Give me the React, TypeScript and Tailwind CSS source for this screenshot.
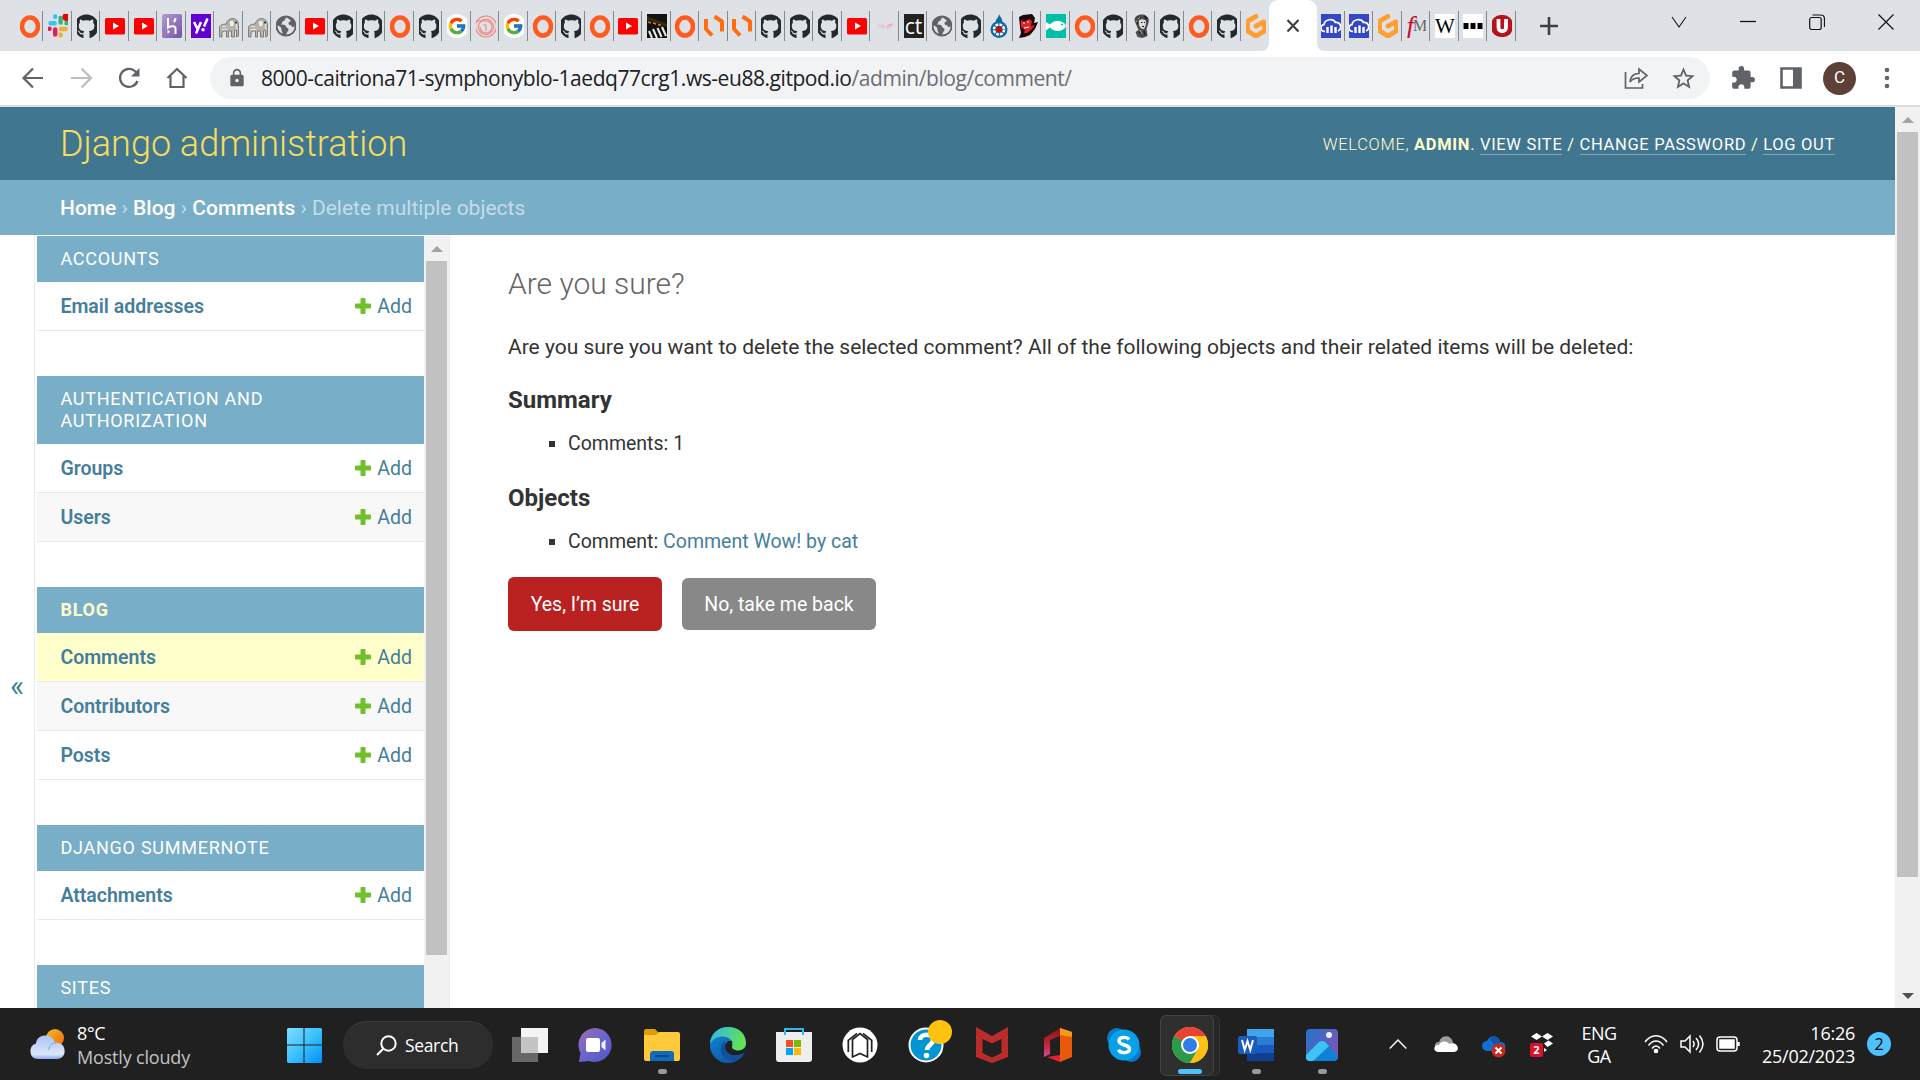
import React from "react";
import { FaGithub } from "react-icons/fa";
import { FcGoogle } from "react-icons/fc";
import { SiGitpod } from "react-icons/si";
import { MdOutlineStarBorder, MdLock, MdExtension } from "react-icons/md";

const UI = "font-['Open_Sans','Noto_Sans',sans-serif]";

const Svg = ({ children, vb = "0 0 24 24", c = "w-6 h-6" }: { children: React.ReactNode; vb?: string; c?: string }) => (
  <svg viewBox={vb} className={`${c} shrink-0`} fill="none">{children}</svg>
);

const Ring = () => (
  <Svg><ellipse cx="12" cy="12.5" rx="8" ry="9" stroke="#ff5a1f" strokeWidth="4.6" /></Svg>
);
const Slack = () => (
  <Svg>
    <g strokeWidth="4.4" strokeLinecap="round">
      <path d="M4.5 9.2h4.2M9.2 2.4v.3" stroke="#36c5f0" />
      <path d="M14.6 4v4.5" stroke="#2eb67d" /><path d="M20.5 9h.2" stroke="#2eb67d" />
      <path d="M15 15h4.8M14.6 20.6v.6" stroke="#ecb22e" />
      <path d="M9.2 15.5v5M3.4 14.8h.2" stroke="#e01e5a" />
    </g>
    <circle cx="20.5" cy="3" r="4" fill="#e00" />
  </Svg>
);
const Github = () => <FaGithub className="size-[25px] shrink-0 text-[#24292f]" />;
const Youtube = () => (
  <Svg><rect x="2" y="4" width="20" height="16.5" rx="1.5" fill="#f00" /><path d="M10 8.5v7l6-3.5z" fill="#fff" /></Svg>
);
const Heroku = () => (
  <Svg>
    <defs><linearGradient id="hk" x1="0" y1="0" x2="1" y2="1"><stop stopColor="#b29bd2" /><stop offset="1" stopColor="#76549f" /></linearGradient></defs>
    <rect x="2" width="20" height="24" rx="2" fill="url(#hk)" />
    <path d="M8 4v9.5c3-1.6 7.500-2.300 7.500 1V20M15.500 4c0 1.800-.7 3-1.700 4" stroke="#fff" strokeWidth="2" />
    <path d="M7.500 15.500l2.500 2.300-2.500 2.300z" fill="#fff" />
  </Svg>
);
const Yahoo = () => (
  <Svg>
    <path d="M0 0h24v24H0z" fill="#6001d2" />
    <path d="M5 8l3.300 6.500M12 8L7 19.500M18.500 4.500L15 12.500" stroke="#fff" strokeWidth="2.600" />
    <circle cx="14" cy="15.800" r="1.700" fill="#fff" />
  </Svg>
);
const Elephant = () => (
  <Svg>
    <path d="M2.500 23v-9c0-3 3-4 7-4 0-3 3-5.500 6-5.500 4 0 6 3 6 7V22l-2 1v-7l-2 .5V23h-3v-6h-3v6h-2v-6H7l-2 1v5z" fill="#b9b6af" stroke="#6d6a64" strokeWidth=".8" />
    <path d="M12 7c3-2 5.500 0 5.500 3s-3 4-5 2z" fill="#efece6" stroke="#777" strokeWidth=".5" />
    <path d="M5 13c1-1 3-1 4 0M5 15.500h5M19.500 10l.5 6" stroke="#ece9e2" strokeWidth="1" /><circle cx="19" cy="8.500" r=".9" fill="#111" />
  </Svg>
);
const Globe = () => (
  <Svg>
    <circle cx="12" cy="12" r="10.500" fill="#5f6368" />
    <path d="M12.500 3.500c-2 1-1 3-3 3.500s-1 3-2.500 3.500c2 .5 4.500 0 5 2s2.500 1 2.500 3-2 2-2 5c5 0 8-4 8-8-1 .5-2.500 1-3-.5s-3-.5-3-2.500 2.500-1.500 2-3.500z" fill="#dee1e6" />
    <path d="M3.500 11.500c2 .5 4 1.500 4 4s1 2 1 4.500c-3-1.500-5-4.500-5-8.500z" fill="#dee1e6" />
  </Svg>
);
const Google = () => (
  <span className="flex size-6 shrink-0 items-center justify-center rounded-full bg-white"><FcGoogle className="size-[20px]" /></span>
);
const Pink = () => (
  <Svg><g stroke="#f2857c" strokeWidth="1.100"><circle cx="12" cy="12.500" r="10.500" /><path d="M2 7h10a6 6 0 1 1-6 6M9 11h3v6" /><circle cx="12" cy="13" r="7.600" /></g></Svg>
);
const Piano = () => (
  <Svg>
    <path d="M0 0h24v24H0z" fill="#141210" /><path d="M2 2l20 8v3L2 6z" fill="#3a2a10" />
    <path d="M4 17l3 7M8 15l4 9M12.500 14l4 9M17 13l4 9" stroke="#eee" strokeWidth="2" />
    <path d="M3 8l3 1M8 9l3 1M13 11h3" stroke="#b98c33" strokeWidth="1.500" />
  </Svg>
);
const Hex = () => (
  <Svg><path d="M4 5L4 15 10 21.500M12.500 2.500L20 7.500 20 17.500" stroke="#ff6d10" strokeWidth="4" strokeLinejoin="round" /></Svg>
);
const Feather = () => (
  <Svg><path d="M3 11l7 4 4-2-4-3zM13 12l9-4-3 5-5 3z" fill="#e8c9d2" /><path d="M14 12l5-2" stroke="#e79a9e" /></Svg>
);
const Ct = () => (
  <span className="flex h-6 w-5 shrink-0 items-center justify-center bg-[#222] font-['Open_Sans',sans-serif] text-[21px] leading-6 text-white">ct</span>
);
const Drop = () => (
  <Svg>
    <path d="M12 0c0 4-4 5-3 8h6c1-3-2-5-3-8z" fill="#0b69a3" />
    <circle cx="12" cy="15.500" r="8.500" fill="#0b69a3" /><circle cx="12" cy="15.500" r="5" stroke="#fff" strokeWidth="2.600" strokeDasharray="2.700 1.200" /><circle cx="12" cy="15.500" r="3.200" fill="#b11" />
  </Svg>
);
const Devil = () => (
  <Svg>
    <path d="M3 3l4-2 9-1 3 4-1 5 4-1-3 7-5 6-5 2-6 1 2-5-1-6z" fill="#1c0808" />
    <path d="M5 6l3 2 5-3 3 2-1 5 4-1-3 4-5 4-3 0 1-3-4-3z" fill="#e2222a" /><path d="M7 9h2M11 8h2M8 14l5-1" stroke="#fff" strokeWidth="1.200" />
  </Svg>
);
const Fish = () => (
  <Svg><path d="M0 0h24v24H0z" fill="#00bfa5" /><path d="M2 8l4 2.500C9 7 14 6 17 7.500c3 1 5 3 5 4.500s-3 4-6 4.800c-4 .8-8-.8-10-3.300L2 16.500z" fill="#fff" /><circle cx="18" cy="10.500" r="1" fill="#00bfa5" /></Svg>
);
const Portrait = () => (
  <Svg>
    <path d="M5 8c-2-6 4-8 8-7.500s7 4 5.500 8.500l-2 6 1 7-5 2-5-1-2-5 3-2z" fill="#4b4b4b" /><path d="M9 6.500c2-2 7-1.500 7 1.500s-1 7-3 7-5-3-4-8.500z" fill="#dcdcdc" />
    <path d="M8 3l3 1M14 2l3 3M9 18l3 2M14 17l1 4M11 8.500h1.500M14 8.500h1M12 12.500h2M7 7l1 3" stroke="#161616" strokeWidth="1.100" /><path d="M8 5l2-2M5.500 8l2-1M10 16l2 4" stroke="#ccc" strokeWidth=".8" />
  </Svg>
);
const Gitpod = () => <SiGitpod className="size-6 shrink-0 text-[#ff9e33]" />;
const Cloud = () => (
  <Svg>
    <path d="M0 0h24v24H0z" fill="#3448c5" />
    <path d="M6 17.500c-5 0-5.500-6-1-7C6 5 14 4 16.500 8.500 22 8 23.500 15 19 17" stroke="#fff" strokeWidth="1.700" />
    <path d="M8.500 13v6M12.500 11.500V19M16.500 13v6" stroke="#fff" strokeWidth="2.400" />
  </Svg>
);
const FM = () => (
  <span className="flex h-6 w-5 shrink-0 items-center justify-center font-['Liberation_Serif',serif] leading-6"><i className="text-[27px] text-[#c8102e]">f</i><span className="-ml-px text-[16px] tracking-[-1px] text-[#666]">M</span></span>
);
const Wiki = () => (
  <span className="flex h-6 w-5 shrink-0 items-center justify-center bg-white font-['Liberation_Serif',serif] text-[21px] leading-6 text-black">W</span>
);
const Dots = () => (
  <Svg><path d="M0 0h24v24H0z" fill="#fff" /><path d="M2.500 9h5v6h-5zM9.500 9h5v6h-5zM16.500 9h5v6h-5z" fill="#000" /></Svg>
);
const Shield = () => (
  <Svg><rect x="1.500" y="1" width="21" height="22" rx="9" fill="#b5121b" /><path d="M8.500 5v8.500c0 5 7.500 5 7.500 0V5" stroke="#fff" strokeWidth="3.800" /></Svg>
);

const leftTabs = [
  Ring, Slack, Github, Youtube, Youtube, Heroku, Yahoo, Elephant, Elephant, Globe, Youtube, Github, Github, Ring, Github, Google,
  Pink, Google, Ring, Github, Ring, Youtube, Piano, Ring, Hex, Hex, Github, Github, Github, Youtube, Feather, Ct, Globe, Github,
  Drop, Devil, Fish, Ring, Github, Portrait, Github, Ring, Github, Gitpod,
];
const rightTabs = [Cloud, Cloud, Gitpod, FM, Wiki, Dots, Shield];

const Tab = ({ icon: Icon, last = false }: { icon: React.ComponentType; last?: boolean }) => (
  <div className="flex h-[30px] w-[28.530px] shrink-0 items-center">
    <div className="ml-[4.900px] flex h-6 w-5 items-center justify-center overflow-hidden"><Icon /></div>
    {!last && <div className="ml-auto h-[30px] w-px bg-[#85888c]" />}
  </div>
);

const TabStrip = () => (
  <div className="flex h-[51px] bg-[#dee1e6]">
    <div className="flex w-[1269px] shrink-0 pl-[14.700px] pt-[11px]">
      {leftTabs.map((t, i) => <Tab key={i} icon={t} last={i === leftTabs.length - 1} />)}
    </div>
    <svg className="-ml-2 h-[51px] w-16 shrink-0" viewBox="0 0 64 51">
      <path d="M0 51c6 0 8-4 8-9V10C8 4 12 0 18 0h28c6 0 10 4 10 10v32c0 5 2 9 8 9z" fill="#fff" />
      <path d="M26.500 20l11 11.500M37.500 20l-11 11.500" stroke="#3c4043" strokeWidth="2.200" />
    </svg>
    <div className="-ml-[9px] flex pt-[11px]">{rightTabs.map((t, i) => <Tab key={i} icon={t} />)}</div>
    <svg className="ml-[23px] mt-[16px] size-[20px]" viewBox="0 0 20 20"><path d="M10 1v18M1 10h18" stroke="#3c4043" strokeWidth="2.600" /></svg>
    <div className="ml-auto flex items-center gap-[53px] pb-[8px] pr-[26px]">
      <svg className="size-4" viewBox="0 0 16 16"><path d="M1 3l7 10 7-10" stroke="#222" fill="none" strokeWidth="1.200" /></svg>
      <svg className="size-4" viewBox="0 0 16 16"><path d="M0 7.500h16" stroke="#111" strokeWidth="1.300" /></svg>
      <svg className="size-4" viewBox="0 0 16 16"><rect x=".7" y="3.500" width="11.500" height="12" rx="2" stroke="#111" fill="none" strokeWidth="1.200" /><path d="M3.500 1h8c2.500 0 4 1.500 4 4v8" stroke="#111" fill="none" strokeWidth="1.200" /></svg>
      <svg className="size-4" viewBox="0 0 16 16"><path d="M.5 .5l15 15M15.500 .5l-15 15" stroke="#111" strokeWidth="1.200" /></svg>
    </div>
  </div>
);

const Toolbar = () => (
  <div className="flex h-[56px] items-center border-b-2 border-[#dadce0] bg-white pl-[21px]">
    <svg className="size-6" viewBox="0 0 24 24" fill="none" stroke="#5f6368" strokeWidth="2.200"><path d="M22 12H3M12 2.500L2.500 12l9.500 9.500" /></svg>
    <svg className="ml-[25px] size-6" viewBox="0 0 24 24" fill="none" stroke="#bcbec1" strokeWidth="2.200"><path d="M1 12h19M11.500 2.500L21 12l-9.500 9.500" /></svg>
    <svg className="ml-[23px] size-6" viewBox="0 0 24 24" fill="none" stroke="#5f6368" strokeWidth="2.300"><path d="M20.500 15A9 9 0 1 1 18.500 5.500L21 8" /><path d="M22.500 2v8.500H14z" fill="#5f6368" stroke="none" /></svg>
    <svg className="ml-[24px] size-6" viewBox="0 0 24 24" fill="none" stroke="#5f6368" strokeWidth="2.200"><path d="M2.500 12L12 3l9.500 9M5.500 10v11h13V10" /></svg>
    <div className="ml-[21px] flex h-[42px] w-[1500px] items-center rounded-full bg-[#f1f3f4] pl-[17px] pr-[13.500px]">
      <MdLock className="size-[20px] text-[#5f6368]" />
      <div className={`ml-[14px] pt-[2px] whitespace-nowrap text-[21px] tracking-[-0.445px] text-[#202124] ${UI}`}>8000-caitriona71-symphonyblo-1aedq77crg1.ws-eu88.gitpod.io<span className="text-[#6b6f74]">/admin/blog/comment/</span></div>
      <svg className="ml-auto size-6" viewBox="0 0 24 24" fill="none" stroke="#5f6368" strokeWidth="1.700"><path d="M1.500 6v16h17v-4M6 16c.5-6 4-8.500 9-8.500V3l8 6.500-8 6.500v-4c-4 0-7 1-9 4z" /></svg>
      <MdOutlineStarBorder className="ml-[22px] size-[27px] text-[#5f6368]" />
    </div>
    <MdExtension className="ml-[20px] size-[26px] text-[#5f6368]" />
    <svg className="ml-[24px] size-[22px]" viewBox="0 0 22 22"><path d="M1.500 1.500h19v19h-19z" stroke="#5f6368" strokeWidth="2.600" fill="none" /><path d="M13 1h8v20h-8z" fill="#5f6368" /></svg>
    <div className="ml-[21px] flex size-[33px] items-center justify-center rounded-full bg-[#5d4037] font-[Roboto,sans-serif] text-[17px] text-white">C</div>
    <svg className="ml-[22px] size-6" viewBox="0 0 24 24" fill="#5f6368" ><circle cx="9" cy="4" r="2.300" /><circle cx="9" cy="12" r="2.300" /><circle cx="9" cy="20" r="2.300" /></svg>
  </div>
);

const Arrow = ({ down = false }: { down?: boolean }) => (
  <svg className="h-[6px] w-[12px]" viewBox="0 0 12 6"><path d={down ? "M0 0h12L6 6z" : "M0 6h12L6 0z"} fill={down ? "#505050" : "#a3a3a3"} /></svg>
);

const apps = [
  { name: "Accounts", models: ["Email addresses"] },
  { name: "Authentication and Authorization", models: ["Groups", "Users"] },
  { name: "Blog", models: ["Comments", "Contributors", "Posts"], current: true },
  { name: "Django Summernote", models: ["Attachments"] },
  { name: "Sites", models: ["Sites"] },
];

const Sidebar = () => (
  <div className="flex h-full w-[416px] border-x border-[#eaeaea] pt-px">
    <div className="ml-[2px] w-[387px] shrink-0 overflow-hidden">
      {apps.map((a) => (
        <div key={a.name} className="mb-[45px]">
          <div className={`bg-[#79aec8] px-[23.400px] py-3 text-[18px] leading-[22px] tracking-[0.750px] uppercase ${a.current ? "font-bold text-[#ffc]" : "text-white"}`}>
            <span className="block w-[260px]">{a.name}</span>
          </div>
          {a.models.map((m, i) => (
            <div key={m} className={`flex h-[49px] items-center border-b border-[#e8e8e8] pl-[23.400px] pr-3 text-[19.500px] text-[#447e9b] ${m === "Comments" ? "bg-[#ffc]" : i % 2 ? "bg-[#f8f8f8]" : "bg-white"}`}>
              <span className="pt-[2px] font-semibold">{m}</span>
              <svg className="ml-auto mr-[6px] size-4" viewBox="0 0 16 16"><path d="M6.500 0h3q1 0 1 1v4.500H15q1 0 1 1v3q0 1-1 1h-4.500V15q0 1-1 1h-3q-1 0-1-1v-4.500H1q-1 0-1-1v-3q0-1 1-1h4.500V1q0-1 1-1z" fill="#70bf2b" /></svg>
              <span className="pt-[2px]">Add</span>
            </div>
          ))}
        </div>
      ))}
    </div>
    <div className="flex w-[25px] flex-col items-center bg-[#f1f1f1] pt-[10px]">
      <Arrow />
      <div className="mt-[9px] mr-[2px] ml-[2px] h-[694px] w-[21px] bg-[#c1c1c1]" />
    </div>
  </div>
);

const toolLink = "border-b border-[#7fa5b8] text-white";

const Admin = () => (
  <div className="flex h-[901px] bg-white font-[Roboto,sans-serif]">
    <div className="flex w-[1895px] flex-col">
      <header className="flex h-[73px] shrink-0 items-center justify-between bg-[#417690] px-[60px] text-[#ffc]">
        <h1 className="pt-px text-[36px] font-light text-[#f5dd5d]">Django administration</h1>
        <div className="pt-[2px] whitespace-nowrap text-[16.500px] leading-[19px] tracking-[0.680px] uppercase">
          <span className="font-light">Welcome, </span><b>admin</b>. <span className={toolLink}>View site</span> / <span className={toolLink}>Change password</span> / <span className={toolLink}>Log out</span>
        </div>
      </header>
      <nav className="flex h-[55px] shrink-0 items-center bg-[#79aec8] px-[60px] pt-[2px] text-[21px] text-[#c4dce8]">
        <div><span className="font-medium text-white">Home</span> › <span className="font-medium text-white">Blog</span> › <span className="font-medium text-white">Comments</span> › Delete multiple objects</div>
      </nav>
      <div className="flex min-h-0 flex-1">
        <div className="flex w-[34px] items-center justify-center pb-[4px] pt-[132px] text-[30px] leading-none text-[#447e9b]">«</div>
        <Sidebar />
        <main className="pl-[58px] pt-[31px] text-[#333]">
          <h1 className="text-[30px] leading-[36px] font-light text-[#666]">Are you sure?</h1>
          <p className="mt-[29px] text-[21px] leading-[32px] tracking-[-0.010px]">Are you sure you want to delete the selected comment? All of the following objects and their related items will be deleted:</p>
          <h2 className="mt-[22px] text-[24px] leading-[30px] font-bold">Summary</h2>
          <div className="mt-[14px] flex items-center pl-[41px] text-[19.500px] leading-[30px]"><span className="mr-[13px] size-[6px] bg-[#333]" />Comments: 1</div>
          <h2 className="mt-[24px] text-[24px] leading-[30px] font-bold">Objects</h2>
          <div className="mt-[14px] flex items-center pl-[41px] text-[19.500px] leading-[30px]"><span className="mr-[13px] size-[6px] bg-[#333]" /><span>Comment: <span className="text-[#447e9b]">Comment Wow! by cat</span></span></div>
          <div className="mt-[20px] flex items-center gap-[20px] text-[19.500px] text-white">
            <button className="h-[54px] w-[154px] rounded-[6px] bg-[#ba2121] pt-[2px]">Yes, I’m sure</button>
            <button className="h-[52px] w-[194px] rounded-[6px] bg-[#888] pt-[2px]">No, take me back</button>
          </div>
        </main>
      </div>
    </div>
    <div className="flex w-[25px] flex-col items-center bg-[#f1f1f1] pt-[10px] pb-[9px]">
      <Arrow />
      <div className="mt-[9px] mb-auto h-[745px] w-[21px] bg-[#c1c1c1]" />
      <Arrow down />
    </div>
  </div>
);

const big = "size-9";
const I = ({ children }: { children: React.ReactNode }) => <svg viewBox="0 0 36 36" className={big} fill="none">{children}</svg>;

const dock: { icon: React.ReactNode; mark?: boolean; active?: boolean }[] = [
  { icon: <I><path d="M0 10h26v25H0z" fill="#676767" /><path d="M9 1h27v25H9z" fill="#f4f4f4" /><path d="M9 10h17v16H9z" fill="#c4c4c4" /></I> },
  { icon: <I><defs><linearGradient id="ch" x1="0" y1="0" x2="1" y2="1"><stop stopColor="#a06ab0" /><stop offset=".5" stopColor="#6b66cc" /><stop offset="1" stopColor="#4f55c6" /></linearGradient></defs><path d="M18 1a17 17 0 1 1-7 33L1 35l1.500-9A17 17 0 0 1 18 1z" fill="url(#ch)" /><rect x="8" y="11" width="14" height="14" rx="2" fill="#fff" /><path d="M23.500 16l4-3.500v11l-4-3.500z" fill="#eef" /></I> },
  { mark: true, icon: <I><path d="M0 4q0-2 2-2h9l4 4v8H0z" fill="#e19b06" /><path d="M0 8h12l3-3h19q2 0 2 2v25q0 2-2 2H2q-2 0-2-2z" fill="#ffca3a" /><path d="M6 34v-7q0-3 3-3h18q3 0 3 3v7z" fill="#0f6cbd" /><path d="M11 29h14" stroke="#0a4a8a" strokeWidth="2" /></I> },
  { icon: <I><defs><linearGradient id="ed" x1="0" y1="0" x2="1" y2=".3"><stop stopColor="#2fb4ee" /><stop offset="1" stopColor="#62e356" /></linearGradient><linearGradient id="ed2" x1="0" y1="0" x2="1" y2="1"><stop stopColor="#1088dc" /><stop offset="1" stopColor="#0f4b97" /></linearGradient></defs><circle cx="18" cy="18" r="18" fill="url(#ed2)" /><path d="M0 17C1-6 36-5 36 16c0 7-8 10-14 7-3-2 0-3 0-6 0-9-16-11-22 0z" fill="url(#ed)" /><path d="M22 14c-8-2-11 13 0 14 5 1 9-1 12-2l3-7c-5 6-11 5-14 3-2-1 0-4-1-8z" fill="#202020" /><path d="M15 14c-7 4-6 18 8 20 5 0 9-3 11-7-4 2-8 3-12 1-6-2-8-7-7-14z" fill="#114f9f" /></I> },
  { icon: <I><path d="M0 5h36v27q0 3-3 3H3q-3 0-3-3z" fill="#eee" /><path d="M9 8V2h18v6" stroke="#2fb5f3" strokeWidth="2" /><path d="M10 13h7v7h-7z" fill="#f25022" /><path d="M18 13h7v7h-7z" fill="#7fba00" /><path d="M10 21h7v7h-7z" fill="#00a4ef" /><path d="M18 21h7v7h-7z" fill="#ffb900" /></I> },
  { icon: <I><circle cx="18" cy="18" r="17.500" fill="#fff" /><path d="M10.500 30V12.500L18 6.500l7.500 6V30L18 26.500zM6.300 25V13.300L15 6.300M29.700 25V13.300L21 6.300" stroke="#222" strokeWidth="1.700" /></I> },
  { icon: <div className="relative"><I><circle cx="18" cy="18" r="16.500" fill="#0096d6" stroke="#fff" strokeWidth="2" /><path d="M12 13c0-7 13-7 13 0 0 5-6 5-6 10" stroke="#fff" strokeWidth="4.500" /><circle cx="18.500" cy="28.500" r="2.800" fill="#fff" /></I><span className="absolute -top-[7px] left-5 size-6 rounded-full bg-[#ffc20e]" /></div> },
  { icon: <I><path d="M2 0l16 9L34 0v30l-16 6L2 30zM8.500 12v14l9.500 4.500 9.500-4.500V12L18 16.500z" fill="#ba2b2b" fillRule="evenodd" /></I> },
  { icon: <I><defs><linearGradient id="of" x1="0" y1="0" x2="0" y2="1"><stop stopColor="#8e1212" /><stop offset=".6" stopColor="#c0283b" /><stop offset="1" stopColor="#e0469c" /></linearGradient></defs><path d="M4 11l16-10v8l-10 4v14l-6 3z" fill="url(#of)" /><path d="M20 1l12 4v25l-12 5z" fill="#e8590c" /><path d="M20 1l12 4v5l-12-2z" fill="#f29a1c" /><path d="M7 30l13-2v7z" fill="#e81f35" /></I> },
  { icon: <I><circle cx="11" cy="11" r="10" fill="#0a7cc4" /><circle cx="25" cy="25" r="10" fill="#0a78d0" /><circle cx="18" cy="18" r="15.500" fill="#08a0e8" /><path d="M23 12.500c-2-3-10-3-10 1.500 0 5 10.500 3 10.500 8 0 4.500-9 5-11 .8" stroke="#fff" strokeWidth="3.400" /></I> },
  { active: true, icon: <I><circle cx="18" cy="18" r="18" fill="#fbc116" /><path d="M18 18L2.400 9A18 18 0 0 1 33.600 9z" fill="#ea4335" /><path d="M18 18L2.400 9a18 18 0 0 0 15.600 27l7.800-13.500z" fill="#2a9a4b" /><path d="M18 9h15.600A18 18 0 0 1 18 36l7.800-13.500z" fill="#fbc116" /><circle cx="18" cy="18" r="9" fill="#fff" /><circle cx="18" cy="18" r="7" fill="#327ce8" /></I> },
  { mark: true, icon: <I><path d="M9 2h27v8H9z" fill="#41a5ee" /><path d="M9 10h27v8H9z" fill="#2b7cd3" /><path d="M9 18h27v8H9z" fill="#185abd" /><path d="M9 26h27v8H9z" fill="#103f91" /><rect y="9" width="19" height="18" rx="2" fill="#1a5cbe" /><path d="M4 13l2.700 10L9.500 14l2.800 9L15 13" stroke="#fff" strokeWidth="2" /></I> },
  { mark: true, icon: <I><defs><linearGradient id="ph" x1="0" y1="0" x2="1" y2=".6"><stop stopColor="#1f74cf" /><stop offset="1" stopColor="#7a56b5" /></linearGradient></defs><rect x="2" y="2" width="32" height="32" rx="4" fill="url(#ph)" /><path d="M2 29l13-14q3-2 6 0l13 14q-1 5-4 5H6q-4 0-4-5z" fill="#0e82d8" /><path d="M2 28l13-13q3-2 6 0l4 4L9 34H6q-4 0-4-4z" fill="#3ec4f2" /><circle cx="25" cy="8" r="3" fill="#eef" /></I> },
];

const Taskbar = () => (
  <div className={`flex h-[72px] items-center bg-[#202020] text-[18px] text-white ${UI}`}>
    <svg className="ml-[28px] h-[32px] w-[38px]" viewBox="0 0 38 32">
      <defs><linearGradient id="su" x1="0" y1="0" x2="1" y2="1"><stop stopColor="#f6bb26" /><stop offset="1" stopColor="#ec6a0c" /></linearGradient><linearGradient id="cl" x1="0" y1="0" x2="0" y2="1"><stop stopColor="#a9c4f4" /><stop offset=".8" stopColor="#dce7fb" /><stop offset="1" stopColor="#8aaaf0" /></linearGradient></defs>
      <circle cx="27" cy="10" r="9" fill="url(#su)" /><path d="M9 31a8 8 0 0 1-1-15.500C9 5 25 5 27 15c12-2 13 16 2 16z" fill="url(#cl)" /><path d="M21 22c0-5 3-7 7-7" stroke="#7f9ee6" fill="none" />
    </svg>
    <div className="ml-[11px] w-[150px] pt-[2px] leading-[24px] whitespace-nowrap"><div className="tracking-[-0.400px]">8°C</div><div className="tracking-[-0.180px] text-[#c3c3c3]">Mostly cloudy</div></div>
    <svg className="ml-[59px] mt-[2px] h-[36px] w-[36px]" viewBox="0 0 36 36">
      <defs><linearGradient id="wi" gradientUnits="userSpaceOnUse" x1="0" y1="0" x2="36" y2="36"><stop stopColor="#82e0ff" /><stop offset=".5" stopColor="#3dc2fd" /><stop offset="1" stopColor="#0091f8" /></linearGradient></defs>
      <path d="M2 1h15.500v16.500H1V2zM18.500 1H35l1 1v15.500H18.500zM1 18.500h16.500V36H2l-1-1zM18.500 18.500H36V35l-1 1H18.500z" fill="url(#wi)" />
    </svg>
    <div className="ml-[21px] mt-[2px] flex h-[48px] w-[150px] items-center rounded-full border-t border-[#3c3c3c] bg-[#2d2d2d] pl-[33px]">
      <svg className="size-[21px]" viewBox="0 0 21 21" fill="none" stroke="#fff" strokeWidth="2"><circle cx="12.500" cy="8.500" r="7.200" /><path d="M7.500 13.500L1 20" /></svg>
      <span className="ml-[8px] text-[17.500px] font-medium tracking-[-0.350px]">Search</span>
    </div>
    <div className="ml-[4px] flex">
      {dock.map((d, i) => (
        <div key={i} className="relative flex h-[72px] w-[66px] items-center justify-center">
          {d.active && <span className="absolute top-[7px] left-[8px] h-[61px] w-[55px] rounded-md border border-[#353535] bg-[#262626]" />}
          {d.active && <span className="absolute top-[7px] left-[3px] h-[61px] w-[54px] rounded-md border border-[#434343] bg-[#2f2f2f]" />}
          <div className="relative mt-px">{d.icon}</div>
          {d.mark && <span className="absolute bottom-[6px] h-[5px] w-[9px] rounded-full bg-[#9a9a9a]" />}
          {d.active && <span className="absolute bottom-[6px] h-[5px] w-6 rounded-full bg-[#4cc2ff]" />}
        </div>
      ))}
    </div>
    <div className="ml-[34px] flex items-center">
      <svg className="h-[10px] w-[18px]" viewBox="0 0 18 10"><path d="M.7 9.500L9 1l8.300 8.500" stroke="#fff" strokeWidth="1.400" fill="none" /></svg>
      <svg className="ml-[27px] h-[16px] w-6" viewBox="0 0 24 16"><path d="M5 14C-2 12 1 5 5 6 8-2 17-1 19 6l-4 8z" fill="#9b9b9b" /><path d="M4 16c-6-1-4-8 1-7 2-5 9-4 10-1 9-4 12 8 5 8z" fill="#fff" /></svg>
      <div className="relative ml-[24px] h-[16px] w-6"><svg className="h-[16px] w-6" viewBox="0 0 24 16"><path d="M5 15C-2 14-1 5 5 5 8-2 17-1 18 6c8 0 6 9 1 9z" fill="#0f6fd0" /><path d="M8 3c4-5 10-2 10 4l-6 2z" fill="#1056a8" /></svg>
        <svg className="absolute top-[7px] left-[9px] size-[15px]" viewBox="0 0 15 15"><circle cx="7.500" cy="7.500" r="7" fill="#c8281e" /><path d="M4.500 4.500l6 6M10.500 4.500l-6 6" stroke="#fff" strokeWidth="2" /></svg></div>
      <div className="relative ml-[25px] size-[22px]"><svg className="size-[22px]" viewBox="0 0 22 22" fill="#fff"><path d="M0 3.500L5.500 0 11 3.500 5.500 7zM11 3.500L16.500 0 22 3.500 16.500 7zM13 10.500L17.500 7.500 22 10.500 16.500 14zM13 15l3 2-3 2z" /></svg>
        <span className="absolute top-[10px] -left-[1px] flex h-[14px] w-[13px] items-center justify-center rounded-[2px] bg-[#d9112b] text-[11px] font-bold">2</span></div>
      <div className="ml-[22px] w-[48px] pt-[2px] text-center leading-[23px] tracking-[-0.500px]">ENG<br />GA</div>
      <svg className="ml-[21px] h-[20px] w-[24px]" viewBox="0 0 24 20" fill="none" stroke="#fff" strokeWidth="1.500"><path d="M1 8c6-8.500 16-8.500 22 0M4.500 11.500c4.500-6 10.500-6 15 0M8 14.500c2.500-3.500 5.500-3.500 8 0" /><circle cx="12" cy="17" r="1.600" fill="#fff" /></svg>
      <svg className="ml-[12px] h-[20px] w-[24px]" viewBox="0 0 24 20" fill="none" stroke="#fff" strokeWidth="1.500"><path d="M1 7h4l5-5v16l-5-5H1zM13 7c1.500 2 1.500 4 0 6M16 4c3.500 4 3.500 8 0 12M19.500 1.500c4.500 5.500 4.500 11.500 0 17" /></svg>
      <svg className="ml-[12px] h-[16px] w-[24px]" viewBox="0 0 24 16" fill="none" stroke="#fff" strokeWidth="1.500"><rect x="1" y="1" width="20" height="14" rx="3" /><path d="M4 4h14v8H4z" fill="#fff" /><path d="M22.500 6v4" strokeWidth="2.500" /></svg>
      <div className="ml-[14px] w-[101px] pt-px text-right leading-[23px] tracking-[-0.250px]">16:26<br />25/02/2023</div>
      <div className="ml-[12px] flex size-6 items-center justify-center rounded-full bg-[#4cc2ff] text-[16px] text-black">2</div>
    </div>
  </div>
);

export default function App() {
  return (
    <div className="flex h-[1080px] w-[1920px] flex-col overflow-hidden">
      <TabStrip />
      <Toolbar />
      <Admin />
      <Taskbar />
    </div>
  );
}
